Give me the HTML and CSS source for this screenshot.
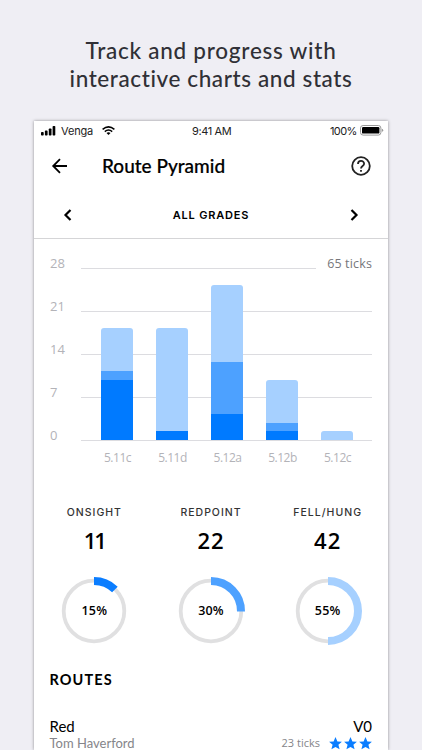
FILE: index.html
```html
<!DOCTYPE html>
<html lang="en">
<head>
<meta charset="utf-8">
<title>Route Pyramid</title>
<link rel="stylesheet" href="styles.css">
</head>
<body>
<h1 class="promo"><span class="promo-a">Track and progress with</span><br><span class="promo-b">interactive charts and stats</span></h1>
<main class="phone">
  <div class="status">
    <svg class="signal" width="15" height="10" viewBox="0 0 15 10"><rect x="0" y="6" width="2.7" height="3.5" rx=".8"/><rect x="3.9" y="4.6" width="2.7" height="4.9" rx=".8"/><rect x="7.8" y="2.5" width="2.7" height="7" rx=".8"/><rect x="11.6" y="0" width="2.7" height="9.5" rx=".8"/></svg>
    <span class="carrier">Venga</span>
    <svg class="wifi" width="13" height="9" viewBox="0 0 13 9"><g fill="none" stroke="#000" stroke-width="1.5"><path d="M.6 3.4Q6.5-1.7 12.4 3.4"/><path d="M2.8 5.6Q6.5 2.4 10.2 5.6"/></g><path d="M4.5 7Q6.5 5.4 8.5 7L6.5 9Z"/></svg>
    <span class="clock">9:41 AM</span>
    <span class="percent">100%</span>
    <svg class="battery" width="24" height="11" viewBox="0 0 24 11"><rect x=".5" y=".5" width="20.4" height="9.6" rx="2.6" fill="#fff" stroke="#999"/><rect x="2" y="2" width="17.4" height="6.6" rx="1.2"/><path d="M21.8 3.7q1.4.3 1.4 1.6t-1.4 1.6z" fill="#999"/></svg>
  </div>
  <header class="bar">
    <svg width="16" height="16" viewBox="0 0 16 16" fill="none" stroke="#000" stroke-width="1.8"><path d="M15 8H1.5M8 1.2L1.2 8 8 14.8"/></svg>
    <h2>Route Pyramid</h2>
    <svg class="help" width="20" height="20" viewBox="0 0 20 20" fill="none" stroke="#222" stroke-width="1.8"><circle cx="10" cy="10" r="8.8"/><path d="M7 8C7 3.9 13.1 4 13.1 7.8 13.1 10 10 10 10 12.4M10 13.9v1.9"/></svg>
  </header>
  <nav class="grades">
    <svg width="8" height="12" viewBox="0 0 8 12"><path d="M6.5 1L1.5 6l5 5"/></svg>
    <span>ALL GRADES</span>
    <svg width="8" height="12" viewBox="0 0 8 12"><path d="M1.5 1l5 5-5 5"/></svg>
  </nav>
  <section class="chart">
    <div class="axis"><span>28</span><span>21</span><span>14</span><span>7</span><span>0</span></div>
    <div class="plot">
      <div class="grid"><i class="short"></i><i></i><i></i><i></i><i></i></div>
      <div class="bars">
        <div class="stack"><b class="light" style="height:43px"></b><b class="mid" style="height:8.5px"></b><b class="dark" style="height:60.5px"></b></div>
        <div class="stack"><b class="light" style="height:103px"></b><b class="dark" style="height:9px"></b></div>
        <div class="stack"><b class="light" style="height:77.3px"></b><b class="mid" style="height:51.7px"></b><b class="dark" style="height:26px"></b></div>
        <div class="stack"><b class="light" style="height:43px"></b><b class="mid" style="height:8.3px"></b><b class="dark" style="height:9px"></b></div>
        <div class="stack"><b class="light" style="height:9px"></b></div>
      </div>
      <div class="names"><span>5.11c</span><span>5.11d</span><span>5.12a</span><span>5.12b</span><span>5.12c</span></div>
      <span class="total">65 ticks</span>
    </div>
  </section>
  <section class="stats">
    <div class="stat"><h3>ONSIGHT</h3><strong class="tight">11</strong>
      <div class="ring"><svg width="70" height="70" viewBox="-35 -35 70 70"><circle r="30.3"/><path d="M0-30A30 30 0 0 1 20.9-21.5" stroke="#0a7dff"/></svg><span>15%</span></div></div>
    <div class="stat"><h3>REDPOINT</h3><strong>22</strong>
      <div class="ring"><svg width="70" height="70" viewBox="-35 -35 70 70"><circle r="30.3"/><path d="M0-30A30 30 0 0 1 30 .5" stroke="#4da1ff"/></svg><span>30%</span></div></div>
    <div class="stat"><h3>FELL/HUNG</h3><strong>42</strong>
      <div class="ring"><svg width="70" height="70" viewBox="-35 -35 70 70"><circle r="30.3"/><path d="M0-30A30 30 0 0 1 0 30" stroke="#a6d0ff"/></svg><span>55%</span></div></div>
  </section>
  <section class="routes">
    <h2>ROUTES</h2>
    <div class="line name"><span>Red</span><span class="grade">V0</span></div>
    <div class="line meta"><span class="author">Tom Haverford</span><span class="ticks">23 ticks</span>
      <svg width="43" height="13" viewBox="0 0 43 13" fill="#0a7dff"><path id="s" d="M6.5 0l1.9 4.4 4.5.3-3.5 3 1.2 4.6-4.1-2.4-4.1 2.4 1.2-4.6L.1 4.7l4.5-.3z"/><use href="#s" x="15"/><use href="#s" x="30"/></svg>
    </div>
  </section>
</main>
</body>
</html>
```
FILE: styles.css
```css
* { box-sizing: border-box; }
body { margin: 0; height: 750px; overflow: hidden; background: #efeef4; color: #000; font-family: Lato, "Open Sans", sans-serif; padding-top: 37px; }
h1, h2, h3 { margin: 0; }
svg { display: block; flex: none; overflow: visible; }
span { white-space: nowrap; }
.promo { height: 84px; text-align: center; font-size: 22.5px; line-height: 28px; font-weight: 500; color: #303036; }
.promo-a { letter-spacing: .75px; }
.promo-b { letter-spacing: .6px; }
.phone { margin: 0 34px; height: 629px; background: #fff; box-shadow: 0 0 3px rgba(0,0,0,.4); overflow: hidden; }
.status { display: flex; align-items: center; height: 19px; padding: 0 5px 0 7px; font: 11px Inter, sans-serif; color: #222; }
.carrier { margin-left: 5px; width: 32px; letter-spacing: -.15px; }
.wifi { margin-left: 9px; }
.clock { margin-left: 77px; width: 39px; letter-spacing: -.4px; }
.percent { margin-left: 99px; width: 27px; letter-spacing: -.6px; }
.battery { margin-left: 3px; }
.bar { display: flex; align-items: center; height: 52px; padding: 0 17px 0 18px; }
.bar h2 { margin: -2px 0 0 34px; font-size: 19px; font-weight: 500; -webkit-text-stroke: .2px #000; }
.help { margin-left: auto; }
.grades { display: flex; align-items: center; justify-content: space-between; height: 47px; padding: 0 30px; border-bottom: 1px solid #d5d5d7; font: 600 11px Inter, sans-serif; letter-spacing: .8px; }
.grades path { fill: none; stroke: #000; stroke-width: 2.2; }
.chart { display: flex; height: 246px; padding: 15px 16px 0; }
.axis { width: 31px; }
.axis span { display: block; height: 43px; font: 13px/19px "Open Sans", sans-serif; color: #b3b3b8; }
.plot { display: grid; grid-template: 187px 26px / 291px; position: relative; }
.grid, .bars { grid-area: 1 / 1; }
.grid { padding-top: 14px; }
.grid i { display: block; height: 43px; border-top: 1px solid #dcdce0; }
.grid .short { width: 235px; }
.bars { display: flex; align-items: flex-end; gap: 23.3px; padding: 0 0 1px 20px; height: 187px; z-index: 1; }
.stack { width: 31.7px; border-radius: 3px 3px 0 0; overflow: hidden; }
.stack b { display: block; }
.light { background: #a6d0ff; }
.mid { background: #4da1ff; }
.dark { background: #007aff; }
.names { display: flex; padding: 4px 0 0 9px; }
.names span { width: 55px; text-align: center; font: 12px/26px "Open Sans", sans-serif; letter-spacing: -.5px; color: #b3b3b8; }
.total { position: absolute; right: 0; top: 0; font: 12.5px/19px "Open Sans", sans-serif; color: #77777b; letter-spacing: .15px; }
.stats { display: flex; padding: 0 2px; height: 170px; }
.stat { width: 116.7px; display: flex; flex-direction: column; align-items: center; }
.stat h3 { padding-top: 20px; font: 500 10.5px/16px Inter, sans-serif; letter-spacing: 1px; color: #333; }
.stat strong { margin-top: 5px; font: 600 22px/28px "Open Sans", sans-serif; letter-spacing: 1px; }
.stat .tight { letter-spacing: -2px; }
.ring { display: grid; margin-top: 21.5px; }
.ring svg, .ring span { grid-area: 1 / 1; }
.ring circle { fill: none; stroke: #e0e0e1; stroke-width: 3.8; }
.ring path { fill: none; stroke-width: 8; }
.ring span { place-self: center; font: 600 12.5px "Open Sans", sans-serif; letter-spacing: .2px; }
.routes { padding: 13px 16px 0 15.5px; }
.routes h2 { font: 700 14.5px/24px Lato, sans-serif; letter-spacing: 1.1px; }
.line { display: flex; align-items: center; }
.name { margin-top: 24px; height: 19px; justify-content: space-between; font-size: 15px; }
.meta { height: 16px; color: #85858a; font-size: 13px; line-height: 14px; }
.ticks { margin-left: auto; margin-right: 9px; font: 11px/14px "Open Sans", sans-serif; }
```
